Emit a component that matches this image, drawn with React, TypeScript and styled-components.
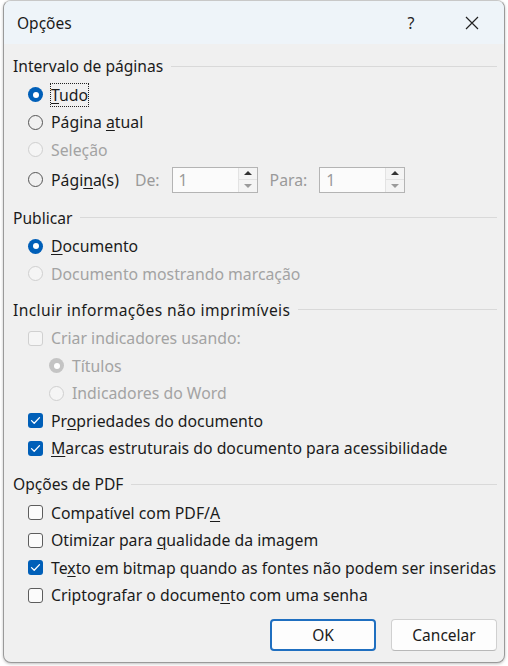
import React from "react"
import styled, { createGlobalStyle } from "styled-components"

const GlobalStyle = createGlobalStyle`
  html, body {
    margin: 0;
    padding: 0;
    background: #ffffff;
  }
  body {
    font-family: "Noto Sans", "Open Sans", sans-serif;
    color: #1b1b1b;
  }
`

const Page = styled.div`
  padding: 0 3px 3px 3px;
  width: 508px;
  box-sizing: border-box;
`

const Dialog = styled.div`
  height: 663px;
  border: 1px solid #9a9a9a;
  border-top-color: #c8c8c8;
  border-radius: 8px;
  background: #f0f0f0;
  overflow: hidden;
  display: flex;
  flex-direction: column;
  box-shadow: 0 1px 3px rgba(0, 0, 0, 0.25);
  box-sizing: border-box;
`

const TitleBar = styled.div`
  height: 43px;
  background: #eef4f9;
  display: flex;
  align-items: center;
  padding: 0 4px 0 13px;
  font-size: 15.5px;
  color: #1a1a1a;
`

const Title = styled.span`
  flex: 1;
`

const TitleButton = styled.div<{ $width: number }>`
  width: ${(p) => p.$width}px;
  height: 43px;
  display: flex;
  align-items: center;
  justify-content: center;
  font-size: 16px;
  color: #222;
`

const Body = styled.div`
  flex: 1;
  padding: 8px 7px 0 9px;
  display: flex;
  flex-direction: column;
`

const SectionHeader = styled.div<{ $first?: boolean; $spread?: number }>`
  height: 28px;
  margin-top: ${(p) => (p.$first ? 0 : 8)}px;
  display: flex;
  align-items: center;
  font-size: 15.6px;
  letter-spacing: ${(p) => p.$spread ?? 0}px;
  &::after {
    content: "";
    flex: 1;
    height: 1px;
    background: #d9d9d9;
    margin-left: 8px;
  }
`

const Items = styled.div`
  padding: 1px 0 0 15px;
  display: flex;
  flex-direction: column;
`

const Row = styled.div<{ $indent?: boolean; $tall?: boolean; $disabled?: boolean }>`
  height: ${(p) => (p.$tall ? 32 : 27.5)}px;
  display: flex;
  align-items: center;
  gap: 8px;
  padding-left: ${(p) => (p.$indent ? 21 : 0)}px;
  font-size: 15.8px;
  color: ${(p) => (p.$disabled ? "#a3a3a3" : "#1b1b1b")};
`

const Label = styled.span<{ $focus?: boolean }>`
  white-space: nowrap;
  ${(p) => (p.$focus ? "outline: 1px dotted #222; outline-offset: 0px;" : "")}
  u {
    text-decoration-thickness: 1px;
    text-underline-offset: 2px;
  }
`

const RadioDot = styled.span<{ $checked?: boolean; $disabled?: boolean }>`
  width: 15px;
  height: 15px;
  border-radius: 50%;
  box-sizing: border-box;
  flex: none;
  display: flex;
  align-items: center;
  justify-content: center;
  background: ${(p) =>
    p.$checked ? (p.$disabled ? "#c4c4c4" : "#005fb8") : p.$disabled ? "#f5f5f5" : "transparent"};
  border: ${(p) =>
    p.$checked ? "none" : p.$disabled ? "1px solid #cfcfcf" : "1px solid #555"};
  &::after {
    content: "";
    display: ${(p) => (p.$checked ? "block" : "none")};
    width: 6px;
    height: 6px;
    border-radius: 50%;
    background: #fff;
  }
`

const Box = styled.span<{ $checked?: boolean; $disabled?: boolean }>`
  width: 15px;
  height: 15px;
  border-radius: 3px;
  box-sizing: border-box;
  flex: none;
  display: flex;
  align-items: center;
  justify-content: center;
  background: ${(p) => (p.$checked ? "#005fb8" : p.$disabled ? "#f5f5f5" : "#fbfbfb")};
  border: ${(p) =>
    p.$checked ? "none" : p.$disabled ? "1px solid #d0d0d0" : "1px solid #5d5d5d"};
`

const SpinLabel = styled.span<{ $gap: number }>`
  color: #9a9a9a;
  margin-left: ${(p) => p.$gap}px;
  font-size: 15.8px;
`

const Spin = styled.div`
  width: 86px;
  height: 26px;
  box-sizing: border-box;
  border: 1px solid #b4b4b4;
  background: #fbfbfb;
  display: flex;
  margin-left: 4px;
`

const SpinValue = styled.span`
  flex: 1;
  padding-left: 6px;
  color: #9a9a9a;
  font-size: 15.8px;
  display: flex;
  align-items: center;
`

const SpinButtons = styled.div`
  width: 18px;
  display: flex;
  flex-direction: column;
  border-left: 1px solid #e3e3e3;
`

const SpinArrow = styled.div<{ $down?: boolean }>`
  flex: 1;
  display: flex;
  align-items: center;
  justify-content: center;
  background: #f4f4f4;
  border-bottom: ${(p) => (p.$down ? "none" : "1px solid #e3e3e3")};
  &::after {
    content: "";
    border-left: 4px solid transparent;
    border-right: 4px solid transparent;
    ${(p) =>
      p.$down
        ? "border-top: 4px solid #9b9b9b;"
        : "border-bottom: 4px solid #333;"}
  }
`

const Footer = styled.div`
  margin-top: 10px;
  display: flex;
  justify-content: flex-end;
  gap: 15px;
`

const Button = styled.button<{ $default?: boolean }>`
  width: 106px;
  height: 32px;
  border-radius: 4px;
  background: #fdfdfd;
  border: ${(p) => (p.$default ? "2px solid #1f6fc0" : "1px solid #d0d0d0")};
  border-bottom-color: ${(p) => (p.$default ? "#1f6fc0" : "#b8b8b8")};
  font-family: inherit;
  font-size: 15.5px;
  color: #1b1b1b;
`

const Check = () => (
  <svg width="11" height="9" viewBox="0 0 11 9">
    <path d="M1.5 4.6 L4.2 7.2 L9.5 1.6" fill="none" stroke="#fff" strokeWidth="1.3" strokeLinecap="round" strokeLinejoin="round" />
  </svg>
)

const Radio = ({ checked, disabled, focus, children }: { checked?: boolean; disabled?: boolean; focus?: boolean; children: React.ReactNode }) => (
  <>
    <RadioDot $checked={checked} $disabled={disabled} />
    <Label $focus={focus}>{children}</Label>
  </>
)

const CheckBox = ({ checked, disabled, children }: { checked?: boolean; disabled?: boolean; children: React.ReactNode }) => (
  <>
    <Box $checked={checked} $disabled={disabled}>{checked && <Check />}</Box>
    <Label>{children}</Label>
  </>
)

const SpinBox = () => (
  <Spin>
    <SpinValue>1</SpinValue>
    <SpinButtons>
      <SpinArrow />
      <SpinArrow $down />
    </SpinButtons>
  </Spin>
)

export default function App() {
  return (
    <Page>
      <GlobalStyle />
      <Dialog>
        <TitleBar>
          <Title>Opções</Title>
          <TitleButton $width={66}>?</TitleButton>
          <TitleButton $width={56}>
            <svg width="14" height="14" viewBox="0 0 14 14">
              <path d="M1 1 L13 13 M13 1 L1 13" stroke="#222" strokeWidth="1.2" />
            </svg>
          </TitleButton>
        </TitleBar>
        <Body>
          <SectionHeader $first>Intervalo de páginas</SectionHeader>
          <Items>
            <Row>
              <Radio checked focus><u>T</u>udo</Radio>
            </Row>
            <Row>
              <Radio>Página <u>a</u>tual</Radio>
            </Row>
            <Row $disabled>
              <Radio disabled>Seleção</Radio>
            </Row>
            <Row $tall>
              <Radio>Pági<u>n</u>a(s)</Radio>
              <SpinLabel $gap={8}>De:</SpinLabel>
              <SpinBox />
              <SpinLabel $gap={4}>Para:</SpinLabel>
              <SpinBox />
            </Row>
          </Items>

          <SectionHeader>Publicar</SectionHeader>
          <Items>
            <Row>
              <Radio checked><u>D</u>ocumento</Radio>
            </Row>
            <Row $disabled>
              <Radio disabled>Documento mostrando marcação</Radio>
            </Row>
          </Items>

          <SectionHeader $spread={0.4}>Incluir informações não imprimíveis</SectionHeader>
          <Items>
            <Row $disabled>
              <CheckBox disabled>Criar indicadores usando:</CheckBox>
            </Row>
            <Row $disabled $indent>
              <Radio checked disabled>Títulos</Radio>
            </Row>
            <Row $disabled $indent>
              <Radio disabled>Indicadores do Word</Radio>
            </Row>
            <Row>
              <CheckBox checked>Pr<u>o</u>priedades do documento</CheckBox>
            </Row>
            <Row>
              <CheckBox checked><u>M</u>arcas estruturais do documento para acessibilidade</CheckBox>
            </Row>
          </Items>

          <SectionHeader>Opções de PDF</SectionHeader>
          <Items>
            <Row>
              <CheckBox>Compatível com PDF/<u>A</u></CheckBox>
            </Row>
            <Row>
              <CheckBox>Otimizar para <u>q</u>ualidade da imagem</CheckBox>
            </Row>
            <Row>
              <CheckBox checked>Te<u>x</u>to em bitmap quando as fontes não podem ser inseridas</CheckBox>
            </Row>
            <Row>
              <CheckBox>Criptografar o docume<u>n</u>to com uma senha</CheckBox>
            </Row>
          </Items>

          <Footer>
            <Button $default>OK</Button>
            <Button>Cancelar</Button>
          </Footer>
        </Body>
      </Dialog>
    </Page>
  )
}
